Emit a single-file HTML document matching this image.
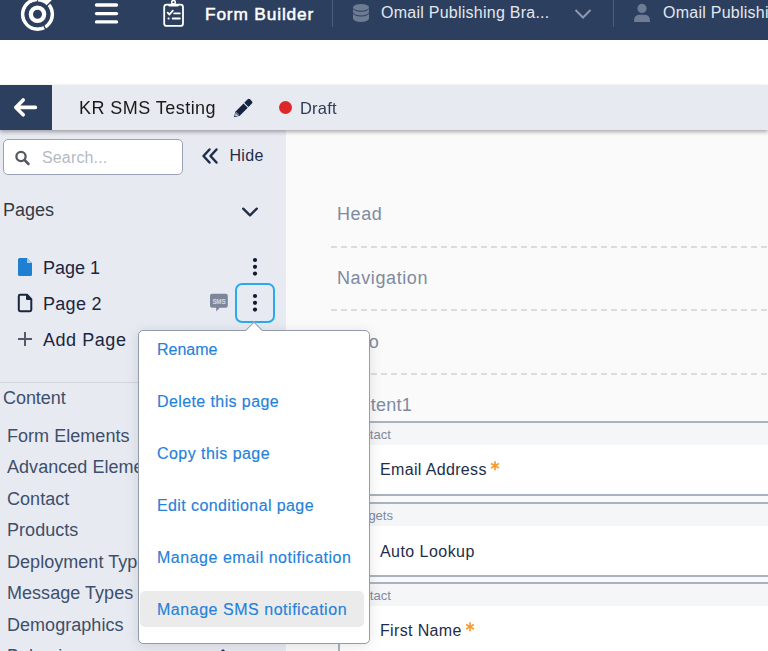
<!DOCTYPE html>
<html><head><meta charset="utf-8">
<style>
*{margin:0;padding:0;box-sizing:border-box}
html,body{width:768px;height:651px;overflow:hidden;background:#fff;font-family:"Liberation Sans",sans-serif}
.abs{position:absolute}
.t{position:absolute;white-space:nowrap;line-height:1}
#hdr{position:absolute;left:0;top:0;width:768px;height:40px;background:#2c3f5e}
#tb{position:absolute;left:0;top:85px;width:768px;height:45px;background:#e8eaf2;will-change:transform;box-shadow:0 2px 4px rgba(0,0,0,0.32);z-index:3}
#back{position:absolute;left:0;top:0;width:52px;height:45px;background:#2c3f5e}
#side{position:absolute;left:0;top:130px;width:286px;height:521px;background:#e8eaf2}
#main{position:absolute;left:286px;top:130px;width:482px;height:521px;background:#fafafa}
#pop{position:absolute;left:138px;top:330px;width:232px;height:314px;background:#fff;border:1px solid #939cad;border-radius:5px;z-index:5;box-shadow:0 2px 14px rgba(0,0,0,0.11)}
.pi{position:absolute;left:18px;font-size:16px;color:#2581da;-webkit-text-stroke:0.15px #2581da;white-space:nowrap;line-height:1}
.blk{position:absolute;left:52px;width:440px;height:75px;border-top:2px solid #aab1c0;border-bottom:2px solid #aab1c0;border-left:2px solid #aab1c0;background:#fff}
.lb{position:absolute;left:6px;top:0;width:100%;height:22px;background:#f5f6f8;font-size:13px;color:#7f8aa0;line-height:24px;padding-left:0}
.fl{position:absolute;left:40px;top:39px;font-size:16px;letter-spacing:0.35px;color:#1e2d4a;white-space:nowrap;line-height:1}
.ast{position:absolute;color:#f7a032;font-size:22px;font-weight:bold;line-height:1}
</style></head><body>
<div id="hdr">
  <svg class="abs" style="left:0;top:0" width="768" height="40">
    <!-- logo -->
    <g>
      <circle cx="37.5" cy="14.3" r="14.75" fill="none" stroke="#fff" stroke-width="3.7"/>
      <polygon points="37.5,-10 62.5,-10 47.5,5 37.5,5" fill="#fff"/>
      <circle cx="37.5" cy="14.3" r="12.9" fill="#2c3f5e"/>
      <circle cx="37.5" cy="14.3" r="6.65" fill="none" stroke="#fff" stroke-width="4.3"/>
      <line x1="37.6" y1="-3" x2="37.6" y2="2" stroke="#2c3f5e" stroke-width="0.9"/>
      <line x1="46.3" y1="6.5" x2="56" y2="-3.2" stroke="#2c3f5e" stroke-width="1.3"/>
      <line x1="42.5" y1="23" x2="47" y2="32" stroke="#2c3f5e" stroke-width="1.4"/>
    </g>
    <!-- hamburger -->
    <g stroke="#fff" stroke-width="3.4" stroke-linecap="round">
      <line x1="96.5" y1="4.95" x2="116.5" y2="4.95"/>
      <line x1="96.5" y1="13.6" x2="116.5" y2="13.6"/>
      <line x1="96.5" y1="21.9" x2="116.5" y2="21.9"/>
    </g>
    <!-- clipboard -->
    <g fill="none" stroke="#fff" stroke-width="1.8" stroke-linecap="round" stroke-linejoin="round">
      <rect x="164.2" y="4.6" width="18.8" height="21.3" rx="2.5"/>
      <path d="M169.2 5.3 H177.8" stroke-width="2.2"/>
      <circle cx="173.5" cy="2.3" r="1.8" stroke-width="1.5"/>
      <path d="M167.6 12.6 l1.9 1.9 l3.3 -3.8"/>
      <line x1="174.2" y1="13.4" x2="179.8" y2="13.4"/>
      <line x1="172.6" y1="18.5" x2="179.8" y2="18.5"/>
    </g>
    <circle cx="168.6" cy="18.5" r="1.1" fill="#fff"/>
    <line x1="332.5" y1="0" x2="332.5" y2="27" stroke="#4c5d7a" stroke-width="1"/>
    <line x1="613.5" y1="0" x2="613.5" y2="27" stroke="#4c5d7a" stroke-width="1"/>
    <!-- db icon -->
    <g fill="#6d7b93">
      <ellipse cx="361" cy="7.4" rx="8" ry="3.4"/>
      <path d="M353 8.3 A8 3.4 0 0 0 369 8.3 V12.1 A8 3.4 0 0 1 353 12.1 Z"/>
      <path d="M353 13 A8 3.4 0 0 0 369 13 V18.6 A8 3.4 0 0 1 353 18.6 Z"/>
    </g>
    <!-- chevron -->
    <path d="M575.5 10 l7.5 7.5 l7.5 -7.5" fill="none" stroke="#8d99ae" stroke-width="2"/>
    <!-- user -->
    <g fill="#6d7b93">
      <circle cx="642" cy="8.4" r="4.6"/>
      <path d="M634 22 V20.5 Q634 14.7 640 14.7 H644 Q650 14.7 650 20.5 V22 Z"/>
    </g>
  </svg>
  <div class="t" style="left:205px;top:6px;font-size:17.3px;font-weight:normal;-webkit-text-stroke:0.5px #fff;letter-spacing:0.85px;color:#fff">Form Builder</div>
  <div class="t" style="left:381px;top:5px;font-size:16px;letter-spacing:0.25px;color:#e3e8f0">Omail Publishing Bra...</div>
  <div class="t" style="left:663px;top:5px;font-size:16px;letter-spacing:0.25px;color:#e3e8f0">Omail Publishing</div>
</div>

<div id="tb">
  <div id="back">
    <svg width="52" height="45"><path d="M15.8 22.4 H35.4 M23.2 15 L15.8 22.4 L23.2 29.8" fill="none" stroke="#fff" stroke-width="3.6" stroke-linecap="round" stroke-linejoin="round"/></svg>
  </div>
  <div class="t" style="left:79px;top:14px;font-size:18px;letter-spacing:0.45px;color:#1a1a1a">KR SMS Testing</div>
  <svg class="abs" style="left:0;top:0" width="300" height="45"><g transform="translate(234,32.2) rotate(-45) scale(0.96)"><path d="M0 0 L5.2 -3.1 V3.1Z" fill="#14233f"/><rect x="5" y="-3.1" width="12.2" height="6.2" fill="#14233f"/><path d="M18.2 -3.1 H23.3 Q25 -3.1 25 -1.4 V1.4 Q25 3.1 23.3 3.1 H18.2Z" fill="#14233f"/><path d="M5.2 -1.9 L2.2 0 L5.2 1.9" fill="none" stroke="#e8eaf2" stroke-width="0.9"/><path d="M3.6 0 H5.6" stroke="#e8eaf2" stroke-width="0.9"/></g></svg>
  <div class="abs" style="left:279px;top:16px;width:13px;height:13px;border-radius:50%;background:#dc2828"></div>
  <div class="t" style="left:300px;top:15px;font-size:16.5px;letter-spacing:0.2px;color:#2d3b55">Draft</div>
</div>

<div id="side">
  <div class="abs" style="left:3px;top:9px;width:180px;height:36px;background:#fff;border:1px solid #9aa3b5;border-radius:5px"></div>
  <svg class="abs" style="left:14px;top:20px" width="18" height="16"><circle cx="7" cy="6.5" r="4.6" fill="none" stroke="#55595f" stroke-width="2.3"/><line x1="10.5" y1="10" x2="14.5" y2="14" stroke="#55595f" stroke-width="2.5" stroke-linecap="round"/></svg>
  <div class="t" style="left:42px;top:20px;font-size:16px;letter-spacing:0.15px;color:#b5b9c4">Search...</div>
  <svg class="abs" style="left:200px;top:17px" width="22" height="18"><path d="M9.5 2.5 L3.5 9 L9.5 15.5 M16.5 2.5 L10.5 9 L16.5 15.5" fill="none" stroke="#1e2d4a" stroke-width="2.5" stroke-linecap="round" stroke-linejoin="round"/></svg>
  <div class="t" style="left:229.5px;top:17.5px;font-size:16px;letter-spacing:0.3px;color:#1e2d4a">Hide</div>
  <div class="t" style="left:3px;top:71px;font-size:18px;color:#333a45">Pages</div>
  <svg class="abs" style="left:240px;top:75px" width="20" height="14"><path d="M3.2 3.6 L10 10.4 L16.8 3.6" fill="none" stroke="#1e2d4a" stroke-width="2.3" stroke-linecap="round" stroke-linejoin="round"/></svg>
  <svg class="abs" style="left:17px;top:127px" width="16" height="20"><path d="M2.5 1 H10 L15 6 V17.5 Q15 19 13.5 19 H2.5 Q1 19 1 17.5 V2.5 Q1 1 2.5 1Z" fill="#1f7fd3"/><path d="M10 1 V6 H15" fill="#a8d0f2" /></svg>
  <div class="t" style="left:43px;top:129px;font-size:18px;color:#1a2540">Page 1</div>
  <svg class="abs" style="left:17px;top:163px" width="16" height="20"><path d="M3.2 1.8 H10 L14.3 6.1 V16.8 Q14.3 18.2 12.9 18.2 H3.2 Q1.8 18.2 1.8 16.8 V3.2 Q1.8 1.8 3.2 1.8Z M10 1.8 V6.1 H14.3" fill="none" stroke="#1a2540" stroke-width="2" stroke-linejoin="round"/></svg>
  <div class="t" style="left:43px;top:165px;font-size:18px;letter-spacing:0.3px;color:#1a2540">Page 2</div>
  <svg class="abs" style="left:17px;top:201px" width="16" height="16"><path d="M8 1 V15 M1 8 H15" stroke="#555b66" stroke-width="2"/></svg>
  <div class="t" style="left:43px;top:201px;font-size:18px;letter-spacing:0.55px;color:#1a2540">Add Page</div>
  <svg class="abs" style="left:251px;top:126px" width="8" height="20"><circle cx="4" cy="4" r="2.1" fill="#0f1b33"/><circle cx="4" cy="10.8" r="2.1" fill="#0f1b33"/><circle cx="4" cy="17.6" r="2.1" fill="#0f1b33"/></svg>
  <svg class="abs" style="left:209px;top:163px" width="20" height="20"><path d="M3 0.8 H16.8 Q18.8 0.8 18.8 2.8 V12.8 Q18.8 14.8 16.8 14.8 H10.8 L7.2 18.5 V14.8 H3 Q1 14.8 1 12.8 V2.8 Q1 0.8 3 0.8Z" fill="#7d8799"/><text x="9.9" y="10.8" font-family="Liberation Sans" font-size="6.3" font-weight="bold" fill="#d5d9e0" text-anchor="middle" letter-spacing="-0.2">SMS</text></svg>
  <div class="abs" style="left:235px;top:153px;width:40px;height:40px;border:2.6px solid #2aa9f1;border-radius:7px"></div>
  <svg class="abs" style="left:251px;top:162px" width="8" height="20"><circle cx="4" cy="4" r="2.1" fill="#0f1b33"/><circle cx="4" cy="10.8" r="2.1" fill="#0f1b33"/><circle cx="4" cy="17.6" r="2.1" fill="#0f1b33"/></svg>
  <div class="abs" style="left:0;top:252px;width:286px;height:1px;background:#d5d6da"></div>
  <div class="t" style="left:3px;top:258.5px;font-size:18px;letter-spacing:-0.05px;color:#3d4f6a">Content</div>
  <div class="t" style="left:7px;top:297px;font-size:18px;letter-spacing:0.04px;color:#3d4f6a">Form Elements</div>
  <div class="t" style="left:7px;top:328px;font-size:18px;letter-spacing:0.04px;color:#3d4f6a">Advanced Elements</div>
  <div class="t" style="left:7px;top:360px;font-size:18px;letter-spacing:0.04px;color:#3d4f6a">Contact</div>
  <div class="t" style="left:7px;top:391px;font-size:18px;letter-spacing:0.04px;color:#3d4f6a">Products</div>
  <div class="t" style="left:7px;top:423px;font-size:18px;letter-spacing:0.04px;color:#3d4f6a">Deployment Types</div>
  <div class="t" style="left:7px;top:454px;font-size:18px;letter-spacing:0.04px;color:#3d4f6a">Message Types</div>
  <div class="t" style="left:7px;top:486px;font-size:18px;letter-spacing:0.04px;color:#3d4f6a">Demographics</div>
  <div class="t" style="left:7px;top:516.5px;font-size:18px;letter-spacing:0.04px;color:#3d4f6a">Behavior</div>
  <svg class="abs" style="left:215px;top:517.5px" width="16" height="10"><path d="M2.5 8 L8 2.5 L13.5 8" fill="none" stroke="#1e2d4a" stroke-width="2.3" stroke-linecap="round" stroke-linejoin="round"/></svg>
</div>
<div id="main">
  <div class="t" style="left:51px;top:75px;font-size:18px;letter-spacing:0.6px;color:#7f8aa0">Head</div>
  <div class="abs" style="left:45px;top:116px;width:437px;height:2px;background:repeating-linear-gradient(90deg,#dcdcdc 0 6px,transparent 6px 10px)"></div>
  <div class="t" style="left:51px;top:139px;font-size:18px;letter-spacing:0.6px;color:#7f8aa0">Navigation</div>
  <div class="abs" style="left:45px;top:179px;width:437px;height:2px;background:repeating-linear-gradient(90deg,#dcdcdc 0 6px,transparent 6px 10px)"></div>
  <div class="t" style="left:51px;top:203px;font-size:18px;letter-spacing:0.6px;color:#7f8aa0">Logo</div>
  <div class="abs" style="left:45px;top:243px;width:437px;height:2px;background:repeating-linear-gradient(90deg,#dcdcdc 0 6px,transparent 6px 10px)"></div>
  <div class="t" style="left:51px;top:265.5px;font-size:18px;letter-spacing:0.25px;color:#7f8aa0">Content1</div>
  <div class="blk" style="top:291px"><div class="lb">Contact</div><div class="fl">Email Address</div><svg class="abs" style="left:149.10000000000002px;top:36.80000000000001px" width="12" height="12"><g stroke="#f89a2c" stroke-width="1.7" stroke-linecap="butt"><line x1="6" y1="1.3" x2="6" y2="10.3"/><line x1="2.1" y1="3.55" x2="9.9" y2="8.05"/><line x1="2.1" y1="8.05" x2="9.9" y2="3.55"/></g></svg></div>
  <div class="blk" style="top:372px"><div class="lb">Widgets</div><div class="fl" style="top:40px;letter-spacing:0.45px">Auto Lookup</div></div>
  <div class="blk" style="top:452px"><div class="lb">Contact</div><div class="fl">First Name</div><svg class="abs" style="left:123.8px;top:37.4px" width="12" height="12"><g stroke="#f89a2c" stroke-width="1.7" stroke-linecap="butt"><line x1="6" y1="1.3" x2="6" y2="10.3"/><line x1="2.1" y1="3.55" x2="9.9" y2="8.05"/><line x1="2.1" y1="8.05" x2="9.9" y2="3.55"/></g></svg></div>
</div>
<div id="pop">
  <div class="abs" style="left:108.8px;top:-7.5px;width:12px;height:12px;background:#fff;border-top:1px solid #939cad;border-left:1px solid #939cad;transform:rotate(45deg)"></div>
  <div class="pi" style="top:11.3px;letter-spacing:0px">Rename</div>
  <div class="pi" style="top:63.3px;letter-spacing:0.4px">Delete this page</div>
  <div class="pi" style="top:115.3px;letter-spacing:0.45px">Copy this page</div>
  <div class="pi" style="top:167.3px;letter-spacing:0.4px">Edit conditional page</div>
  <div class="pi" style="top:219.3px;letter-spacing:0.52px">Manage email notification</div>
  <div class="abs" style="left:1px;top:260px;width:224px;height:36px;background:#ebebeb;border-radius:5px"></div>
  <div class="pi" style="top:271.3px;letter-spacing:0.53px">Manage SMS notification</div>
</div>
</body></html>
